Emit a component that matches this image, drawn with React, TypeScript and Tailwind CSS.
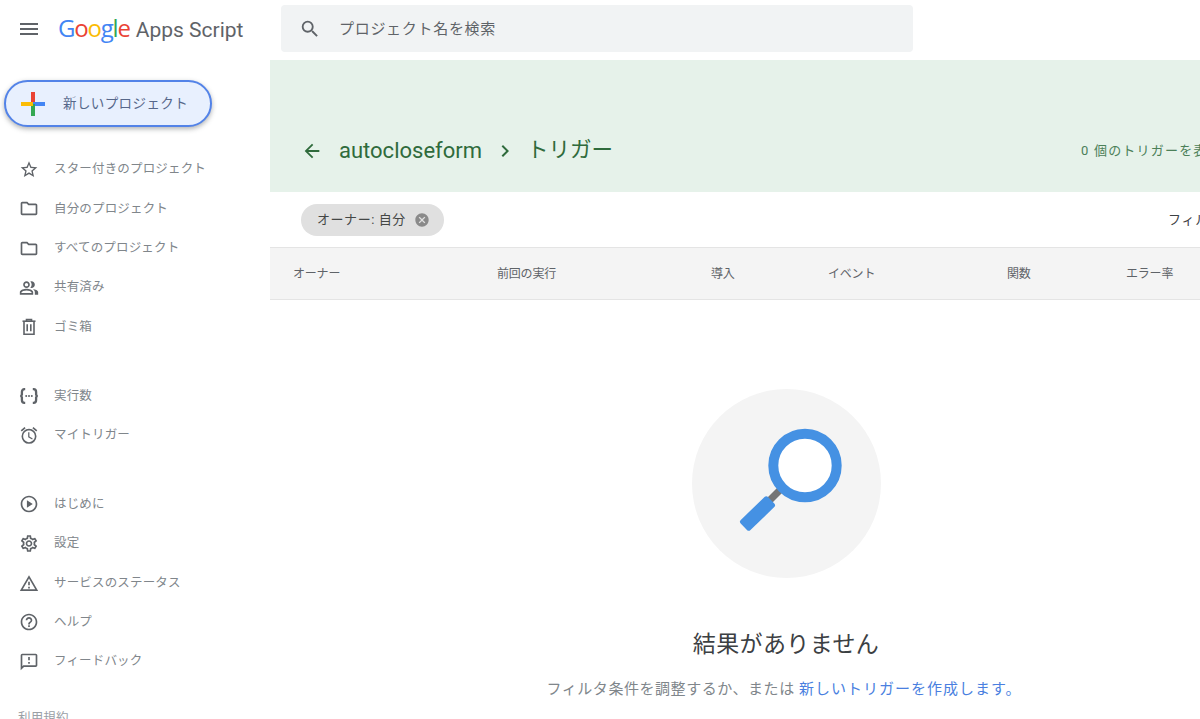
import React from 'react';
import {
  MdMenu,
  MdSearch,
  MdStarBorder,
  MdOutlineFolder,
  MdOutlinePeopleAlt,
  MdOutlineAlarm,
  MdOutlinePlayCircle,
  MdOutlineSettings,
  MdOutlineWarningAmber,
  MdHelpOutline,
  MdOutlineFeedback,
  MdArrowBack,
  MdChevronRight,
  MdCancel,
} from 'react-icons/md';

const FONT = "font-['Roboto','Noto_Sans_CJK_JP',sans-serif]";

const ExecIcon = () => (
  <svg width="20" height="20" viewBox="0 0 20 20" fill="none" stroke="currentColor" strokeWidth="2.3">
    <path d="M6.2 3.2H5.4Q2.9 3.2 2.9 6V8.6L2.2 10L2.9 11.4V14Q2.9 16.8 5.4 16.8H6.2" />
    <path d="M13.8 3.2H14.6Q17.1 3.2 17.1 6V8.6L17.8 10L17.1 11.4V14Q17.1 16.8 14.6 16.8H13.8" />
    <circle cx="7.2" cy="10" r="1" fill="currentColor" stroke="none" />
    <circle cx="10" cy="10" r="1" fill="currentColor" stroke="none" />
    <circle cx="12.8" cy="10" r="1" fill="currentColor" stroke="none" />
  </svg>
);

const TrashIcon = () => (
  <svg width="20" height="20" viewBox="0 0 20 20" fill="none" stroke="currentColor" strokeWidth="1.6">
    <path d="M3.5 4.2H16.5" />
    <path d="M7.5 4V2.6H12.5V4" />
    <path d="M5 4.2V17.2H15V4.2" />
    <path d="M8.2 7.2V14.2M11.8 7.2V14.2" />
  </svg>
);

const PlusIcon = () => (
  <svg width="26" height="26" viewBox="0 0 26 26">
    <rect x="11" y="1" width="4" height="12" fill="#ea4335" />
    <rect x="13" y="11" width="12" height="4" fill="#4285f4" />
    <rect x="11" y="13" width="4" height="12" fill="#34a853" />
    <rect x="1" y="11" width="12" height="4" fill="#fbbc05" />
  </svg>
);

const NavItem = ({ icon, label }: { icon: React.ReactNode; label: string }) => (
  <div className="flex h-[39.33px] items-center pl-[19px]">
    <span className="flex w-5 justify-center text-[#5f6368]">{icon}</span>
    <span className="ml-[15px] text-[12.5px] tracking-[0.17px] text-[#80868b]">{label}</span>
  </div>
);

const Sidebar = () => (
  <aside className="w-[270px] shrink-0">
    <div className="ml-1 mt-[20px] flex h-[47px] w-[208px] items-center rounded-full border-2 border-[#5383e8] bg-[#e8f0fe] pl-[14px] shadow-[0_2px_5px_rgba(60,64,67,0.4)]">
      <PlusIcon />
      <span className="ml-[17px] text-[13.5px] tracking-[0.4px] text-[#56678a]">新しいプロジェクト</span>
    </div>
    <nav className="mt-[23px]">
      <NavItem icon={<MdStarBorder size={21} />} label="スター付きのプロジェクト" />
      <NavItem icon={<MdOutlineFolder size={21} />} label="自分のプロジェクト" />
      <NavItem icon={<MdOutlineFolder size={21} />} label="すべてのプロジェクト" />
      <NavItem icon={<MdOutlinePeopleAlt size={20} />} label="共有済み" />
      <NavItem icon={<TrashIcon />} label="ゴミ箱" />
    </nav>
    <nav className="mt-[30px]">
      <NavItem icon={<ExecIcon />} label="実行数" />
      <NavItem icon={<MdOutlineAlarm size={21} />} label="マイトリガー" />
    </nav>
    <nav className="mt-[29.5px]">
      <NavItem icon={<MdOutlinePlayCircle size={20} />} label="はじめに" />
      <NavItem icon={<MdOutlineSettings size={21} />} label="設定" />
      <NavItem icon={<MdOutlineWarningAmber size={21} />} label="サービスのステータス" />
      <NavItem icon={<MdHelpOutline size={20} />} label="ヘルプ" />
      <NavItem icon={<MdOutlineFeedback size={20} />} label="フィードバック" />
    </nav>
    <p className="ml-[18px] mt-[28px] text-[12.5px] tracking-[0.17px] text-[#9aa0a6]">利用規約</p>
  </aside>
);

const columns = ['オーナー', '前回の実行', '導入', 'イベント', '関数', 'エラー率'];

const Magnifier = () => (
  <svg width="189" height="189" viewBox="0 0 189 189">
    <path d="M76 113L88 101" stroke="#757575" strokeWidth="7" fill="none" />
    <rect x="-7" y="-19" width="14" height="38" rx="2.5" fill="#4591e3" transform="translate(65.5 124.5) rotate(46)" />
    <circle cx="113" cy="76.5" r="31.7" fill="#fff" stroke="#4591e3" strokeWidth="10" />
  </svg>
);

export default function App() {
  return (
    <div className={`${FONT} h-[719px] w-[1200px] overflow-hidden bg-white`}>
      <header className="flex h-[60px] items-start">
        <div className="flex h-[57px] w-[281px] shrink-0 items-center">
          <MdMenu size={24} className="ml-[17px] text-[#5f6368]" />
          <div className="ml-[17px] flex items-baseline text-[21px]">
            <span className="font-['Open_Sans',sans-serif] text-[24px] tracking-[-1.2px]">
              <span className="text-[#4285f4]">G</span>
              <span className="text-[#ea4335]">o</span>
              <span className="text-[#fbbc05]">o</span>
              <span className="text-[#4285f4]">g</span>
              <span className="text-[#34a853]">l</span>
              <span className="text-[#ea4335]">e</span>
            </span>
            <span className="ml-[6px] text-[#5f6368]">Apps Script</span>
          </div>
        </div>
        <div className="mt-[5px] flex h-[47px] w-[632px] items-center rounded bg-[#f1f3f4] pl-[18px]">
          <MdSearch size={22} className="text-[#5f6368]" />
          <span className="ml-[18px] pt-[1px] text-[15px] tracking-[0.7px] text-[#5f6368]">プロジェクト名を検索</span>
        </div>
      </header>
      <div className="flex">
        <Sidebar />
        <main className="w-[1032px] shrink-0">
          <div className="flex h-[132px] items-end whitespace-nowrap bg-[#e6f2ea] pb-[25px] pl-[31px] text-[#2f6b3c]">
            <div className="flex w-[780px] items-center">
              <MdArrowBack size={22} />
              <span className="ml-[16px] text-[22px]">autocloseform</span>
              <MdChevronRight size={24} className="ml-[11px]" />
              <span className="ml-[10px] text-[21.5px]">トリガー</span>
            </div>
            <span className="pb-[7px] text-[13px] tracking-[1.2px] text-[#4b8058]">0 個のトリガーを表示しています</span>
          </div>
          <div className="flex h-[55px] items-center whitespace-nowrap pl-[31px]">
            <div className="flex h-8 w-[143px] items-center rounded-full bg-[#e0e0e0] pl-4 text-[#5f6368]">
              <span className="text-[13px] tracking-[0.55px] text-[#444746]">オーナー: 自分</span>
              <MdCancel size={16} className="ml-[8px] text-[#8a8a8a]" />
            </div>
            <span className="ml-[724px] text-[13px] tracking-[0.8px] text-[#3c4043]">フィルタを追加</span>
          </div>
          <div className="grid h-[53px] grid-cols-[204px_214px_117px_179px_119px_1fr] items-center border-y border-[#e4e4e4] bg-[#f4f4f4] pl-[23px] text-[12px] tracking-[-0.2px] text-[#5f6368]">
            {columns.map((c) => (
              <span key={c}>{c}</span>
            ))}
          </div>
          <div className="flex flex-col items-center pt-[89px]">
            <div className="h-[189px] w-[189px] rounded-full bg-[#f4f4f4]">
              <Magnifier />
            </div>
            <h2 className="mt-[50px] text-[23px] font-normal tracking-[0.4px] text-[#3c4043]">結果がありません</h2>
            <p className="mr-1 mt-[15px] whitespace-nowrap text-[15px] tracking-[0.55px] text-[#80868b]">
              フィルタ条件を調整するか、または <span className="tracking-[1px] text-[#4a7fe0]">新しいトリガーを作成します。</span>
            </p>
          </div>
        </main>
      </div>
    </div>
  );
}
